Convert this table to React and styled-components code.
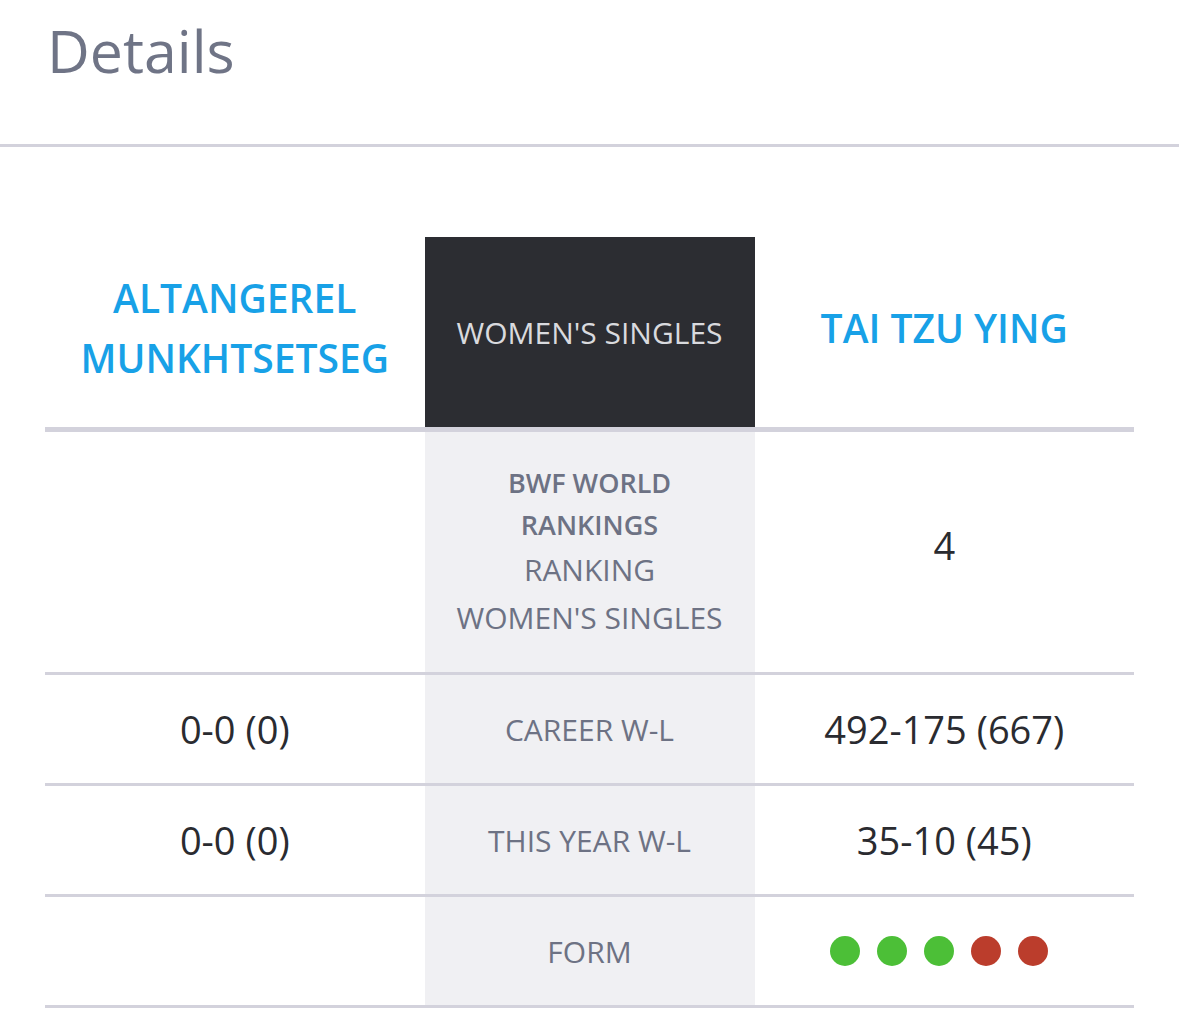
import React from "react";
import styled, { createGlobalStyle } from "styled-components";

const GlobalStyle = createGlobalStyle`
  body {
    margin: 0;
    background: #fff;
    font-family: "Open Sans", "Noto Sans", sans-serif;
  }
`;

const Page = styled.div`
  width: 1179px;
`;

const Header = styled.header`
  height: 147px;
  padding: 10px 0 0 47px;
  box-sizing: border-box;
  border-bottom: 3px solid #d3d2dc;
`;

const Title = styled.h1`
  margin: 0;
  font-size: 59px;
  font-weight: 400;
  color: #6f7486;
`;

const Table = styled.div`
  margin: 90px 45px 0;
`;

const Row = styled.div`
  display: grid;
  grid-template-columns: 1fr 330px 1fr;
  height: ${(p) => p.$height}px;
  border-bottom: ${(p) => p.$line || 3}px solid #d3d2dc;
`;

const Cell = styled.div`
  display: flex;
  flex-direction: column;
  align-items: center;
  justify-content: center;
  text-align: center;
  padding-bottom: ${(p) => p.$lift || 0}px;
`;

const NameCell = styled(Cell)`
  padding-bottom: 9px;
`;

const Name = styled.div`
  font-size: 39px;
  font-weight: 600;
  line-height: 60px;
  color: #18a1e7;
`;

const EventCell = styled(Cell)`
  background: #2c2d32;
  color: #d9dade;
  font-size: 30px;
`;

const LabelCell = styled(Cell)`
  background: #f0f0f3;
  color: #6d7284;
  font-size: 30px;
`;

const LabelStrong = styled.div`
  font-weight: 600;
  font-size: 27px;
  line-height: 42px;
`;

const LabelLine = styled.div`
  line-height: 48px;
`;

const Value = styled.div`
  font-size: 38px;
  color: #2a2b30;
`;

const Dots = styled.div`
  display: flex;
`;

const Dot = styled.span`
  width: 30px;
  height: 30px;
  border-radius: 50%;
  margin-right: 17px;
  background: ${(p) => (p.$win ? "#4cbf37" : "#bb3d2c")};
  &:last-child {
    margin-right: 11px;
  }
`;

const stats = [
  { label: "CAREER W-L", left: "0-0 (0)", right: "492-175 (667)" },
  { label: "THIS YEAR W-L", left: "0-0 (0)", right: "35-10 (45)" },
];

const form = [true, true, true, false, false];

export default function App() {
  return (
    <Page>
      <GlobalStyle />
      <Header>
        <Title>Details</Title>
      </Header>
      <Table>
        <Row $height={190} $line={5}>
          <NameCell>
            <Name>ALTANGEREL</Name>
            <Name>MUNKHTSETSEG</Name>
          </NameCell>
          <EventCell>WOMEN'S SINGLES</EventCell>
          <NameCell>
            <Name>TAI TZU YING</Name>
          </NameCell>
        </Row>
        <Row $height={240}>
          <Cell />
          <LabelCell>
            <LabelStrong>BWF WORLD</LabelStrong>
            <LabelStrong>RANKINGS</LabelStrong>
            <LabelLine>RANKING</LabelLine>
            <LabelLine>WOMEN'S SINGLES</LabelLine>
          </LabelCell>
          <Cell $lift={14}>
            <Value>4</Value>
          </Cell>
        </Row>
        {stats.map((s) => (
          <Row key={s.label} $height={108}>
            <Cell>
              <Value>{s.left}</Value>
            </Cell>
            <LabelCell>{s.label}</LabelCell>
            <Cell>
              <Value>{s.right}</Value>
            </Cell>
          </Row>
        ))}
        <Row $height={108}>
          <Cell />
          <LabelCell>FORM</LabelCell>
          <Cell>
            <Dots>
              {form.map((w, i) => (
                <Dot key={i} $win={w} />
              ))}
            </Dots>
          </Cell>
        </Row>
      </Table>
    </Page>
  );
}
